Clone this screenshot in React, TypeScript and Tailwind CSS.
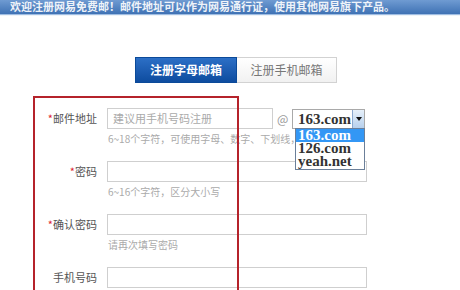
import React from "react";

const font = { fontFamily: '"Noto Sans CJK SC", "Noto Sans", sans-serif' };
const serif = { fontFamily: '"Liberation Serif", "DejaVu Serif", serif' };

function Row({
  label,
  star,
  hint,
  children,
  className = "",
}: {
  label: string;
  star?: boolean;
  hint?: string;
  children: React.ReactNode;
  className?: string;
}) {
  return (
    <div className={"flex flex-col " + className}>
      <div className="flex items-center">
        <div className="w-[98px] pr-[1px] text-right text-[11px] leading-[21px] text-[#555]">
          {star && <span className="text-[#d23]">*</span>}
          {label}
        </div>
        <div className="ml-[9px] flex items-center">{children}</div>
      </div>
      {hint && (
        <div className="ml-[108px] mt-[4px] text-[10px] leading-[12px] text-[#aaa] whitespace-nowrap">
          {hint}
        </div>
      )}
    </div>
  );
}

export default function App() {
  return (
    <div
      className="relative w-[460px] h-[290px] overflow-hidden bg-white"
      style={font}
    >
      <div className="h-[15px] overflow-hidden bg-gradient-to-b from-[#6f9bd2] to-[#3f72b4] border-b border-[#9fbde2]">
        <div className="pl-[10px] text-[11px] leading-[12px] font-bold text-white whitespace-nowrap opacity-90">
          欢迎注册网易免费邮！邮件地址可以作为网易通行证，使用其他网易旗下产品。
        </div>
      </div>
      <div className="h-[1px] bg-[#eef3f8]" />

      <div className="mt-[41px] flex pl-[135px]">
        <div className="flex h-[26px] w-[102px] items-center justify-center border border-[#0b4a99] bg-gradient-to-b from-[#2c6fc6] to-[#0d4c9f] text-[12px] font-bold text-white">
          注册字母邮箱
        </div>
        <div className="flex h-[26px] w-[100px] items-center justify-center border border-l-0 border-[#d2d2d2] bg-gradient-to-b from-white to-[#f1f1f1] text-[12px] text-[#777]">
          注册手机邮箱
        </div>
      </div>

      <div className="mt-[25px] flex flex-col gap-[16px]">
        <Row label="邮件地址" star hint="6~18个字符，可使用字母、数字、下划线，">
          <div className="flex h-[21px] w-[166px] items-center border border-[#cfcfcf] pl-[5px] text-[11px] text-[#aaa]">
            建议用手机号码注册
          </div>
          <span className="ml-[4px] w-[13px] text-[12px] text-[#999]">@</span>
          <div className="relative ml-[2px]">
            <div className="flex h-[20px] w-[73px] items-center justify-between border border-[#a9a9a9] bg-white pl-[5px]">
              <span
                className="text-[15px] font-bold leading-[16px] text-[#333]"
                style={serif}
              >
                163.com
              </span>
              <div className="flex h-[18px] w-[12px] items-center justify-center border-l border-[#8aa8cf] bg-gradient-to-b from-[#e6f0fa] to-[#b7d0ec]">
                <svg width="6" height="4" viewBox="0 0 6 4">
                  <path d="M0 0 L6 0 L3 4 Z" fill="#111" />
                </svg>
              </div>
            </div>
            <div
              className="absolute left-[3px] top-[19px] w-[70px] border border-[#6b7f99] bg-white text-[15px] font-bold leading-[13px]"
              style={serif}
            >
              <div className="bg-[#3397f5] pl-[2px] text-white">163.com</div>
              <div className="pl-[2px] text-[#333]">126.com</div>
              <div className="pl-[2px] pb-[1px] text-[#333]">yeah.net</div>
            </div>
          </div>
        </Row>
        <Row label="密码" star hint="6~16个字符，区分大小写">
          <div className="h-[21px] w-[260px] border border-[#cfcfcf]" />
        </Row>
        <Row label="确认密码" star hint="请再次填写密码">
          <div className="h-[21px] w-[260px] border border-[#cfcfcf]" />
        </Row>
        <Row label="手机号码">
          <div className="h-[21px] w-[260px] border border-[#cfcfcf]" />
        </Row>
      </div>

      <div className="pointer-events-none absolute left-[33px] top-[96px] h-[220px] w-[206px] border-2 border-[#b5232b]" />
    </div>
  );
}
